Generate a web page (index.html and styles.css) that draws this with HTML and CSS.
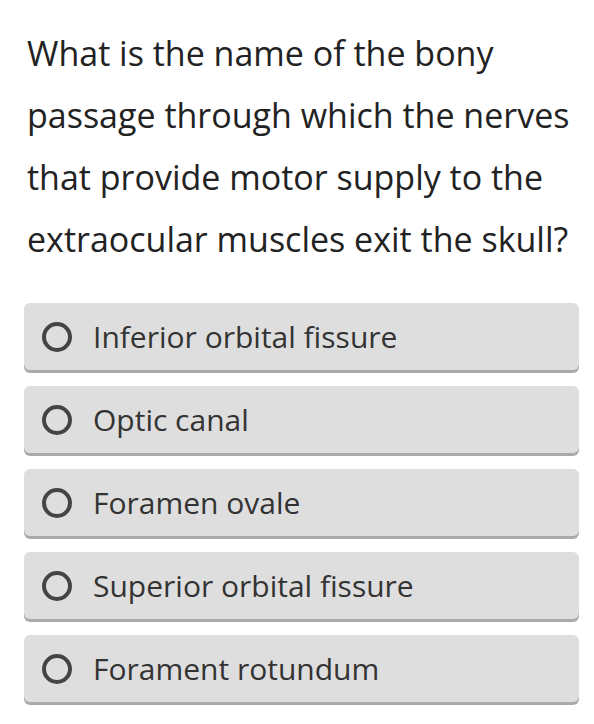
FILE: index.html
```html
<!DOCTYPE html>
<html>
<head>
<meta charset="utf-8">
<link rel="stylesheet" href="styles.css">
</head>
<body>
<div class="quiz">
  <p class="question">What is the name of the bony passage through which the nerves that provide motor supply to the extraocular muscles exit the skull?</p>
  <div class="options">
    <div class="option"><span class="radio"></span><span class="label">Inferior orbital fissure</span></div>
    <div class="option"><span class="radio"></span><span class="label">Optic canal</span></div>
    <div class="option"><span class="radio"></span><span class="label">Foramen ovale</span></div>
    <div class="option"><span class="radio"></span><span class="label">Superior orbital fissure</span></div>
    <div class="option"><span class="radio"></span><span class="label">Forament rotundum</span></div>
  </div>
</div>
</body>
</html>
```

FILE: styles.css
```css
html, body {
  margin: 0;
  padding: 0;
  background: #ffffff;
}
body {
  font-family: "Open Sans", "Noto Sans", sans-serif;
}
.quiz {
  padding: 22px 15px 0 24px;
}
.question {
  margin: 0 0 33px 3px;
  font-size: 34px;
  line-height: 62px;
  color: #222222;
}
.options {
  display: flex;
  flex-direction: column;
  gap: 13px;
}
.option {
  display: flex;
  align-items: center;
  height: 67px;
  background: #dedede;
  border-radius: 6px;
  box-shadow: 0 3px 0 #aaaaaa;
  padding-left: 18px;
  margin-bottom: 3px;
}
.radio {
  width: 22px;
  height: 22px;
  border: 4px solid #444444;
  border-radius: 50%;
  flex: none;
}
.label {
  margin-left: 21px;
  font-size: 30px;
  color: #333333;
}
```
